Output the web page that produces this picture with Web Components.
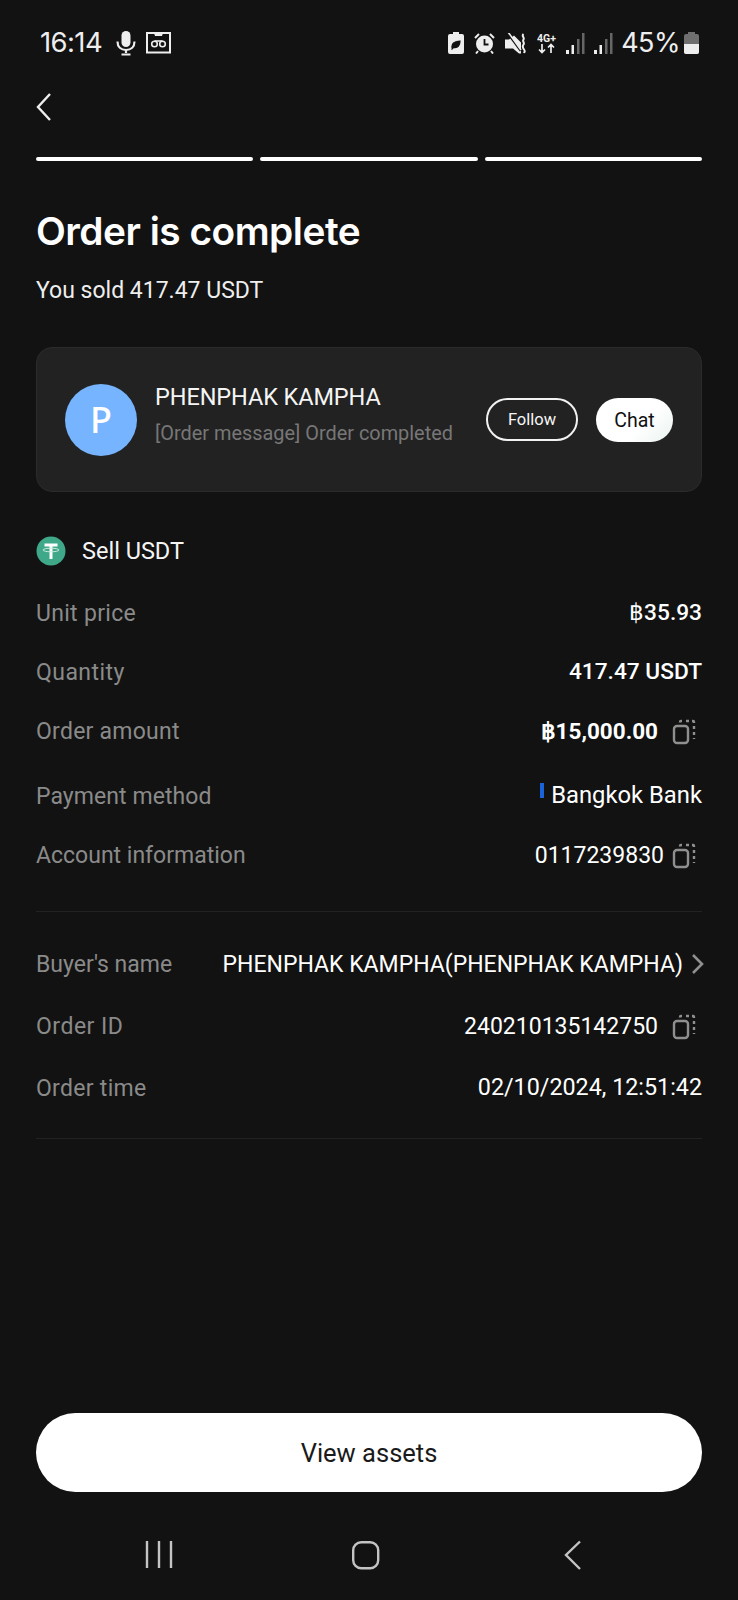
<!doctype html>
<html><head><meta charset="utf-8"><style>
html,body{margin:0;background:#121212}
body{width:738px;height:1600px;overflow:hidden;font-family:Roboto,"Noto Sans",sans-serif;color:#fff}
</style></head><body>
<order-app></order-app>
<template id="status-t"><style>
:host{display:flex;height:86px;box-sizing:border-box;padding:23px 39px 0 40px;justify-content:space-between;align-items:flex-start;color:#eee}
.g{display:flex;align-items:center;height:40px}
.t{font:400 27.5px/40px Inter,Roboto,sans-serif;letter-spacing:-.6px;margin-top:-2px}
svg{display:block}
.p{font:400 27px/40px Inter,Roboto,sans-serif;letter-spacing:-.5px}
</style>
<div class="g"><span class="t">16:14</span>
<svg style="margin-left:13px" width="22" height="26" viewBox="0 0 22 26"><rect x="6.500" y="1" width="9" height="16" rx="4.500" fill="#eee"/><path d="M2.500 11.500c0 5.500 3.500 8.500 8.500 8.500s8.500-3 8.500-8.500" fill="none" stroke="#eee" stroke-width="2.200"/><path d="M11 20v3M6.500 24.500h9" stroke="#eee" stroke-width="2.200"/></svg>
<svg style="margin-left:9px" width="26" height="24" viewBox="0 0 26 24"><rect x="1" y="2" width="23" height="19.500" fill="none" stroke="#eee" stroke-width="2"/><path d="M8 2h9l-1 3H9z" fill="#eee"/><circle cx="8.500" cy="13" r="2.800" fill="none" stroke="#eee" stroke-width="1.600"/><circle cx="16.500" cy="13" r="2.800" fill="none" stroke="#eee" stroke-width="1.600"/><path d="M8.500 10h8" stroke="#eee" stroke-width="1.600"/></svg></div>
<div class="g">
<svg width="16" height="22" viewBox="0 0 16 22"><path d="M5 0h6v2h3a2 2 0 0 1 2 2v16a2 2 0 0 1-2 2H2a2 2 0 0 1-2-2V4a2 2 0 0 1 2-2h3z" fill="#eee"/><path d="M4 16c-.500-5 3-7 8-7 0 5-2.500 7-6 6.500M3.500 17.500l4-4" fill="#121212" stroke="#121212" stroke-width="1.200"/></svg>
<svg style="margin-left:10px" width="21" height="21" viewBox="0 0 21 21"><circle cx="10.500" cy="11" r="8.500" fill="#eee"/><path d="M10.500 6v5.500h4" fill="none" stroke="#121212" stroke-width="1.800"/><path d="M1 5l4-4M20 5l-4-4M4 18l-2 2.500M17 18l2 2.500" stroke="#eee" stroke-width="2"/></svg>
<svg style="margin-left:10px" width="21" height="21" viewBox="0 0 21 21"><path d="M0 6.500h4L9 2.500l7 7v11h-2L8 15.500H0z" fill="#eee"/><path d="M1.500 -1l14 19" stroke="#121212" stroke-width="1.600"/><path d="M3 -1l13 18" stroke="#eee" stroke-width="1.600"/><path d="M18.500 1c-2.500 2 1.500 3.500 0 5.500s1.500 3 0 5-1 3 .5 5 .5 2 0 3.500" fill="none" stroke="#eee" stroke-width="2"/></svg>
<svg style="margin-left:11px" width="21" height="22" viewBox="0 0 21 22"><text x="0" y="9.500" font-family="Roboto,sans-serif" font-size="10.500" font-weight="700" fill="#eee">4G+</text><path d="M5 12v8M2 17.500l3 3 3-3M14 21v-8M11 15.500l3-3 3 3" fill="none" stroke="#eee" stroke-width="1.700"/></svg>
<svg style="margin-left:8px" width="19" height="21" viewBox="0 0 19 21"><rect x="0" y="17" width="3" height="4" fill="#eee"/><rect x="5.500" y="12" width="2.500" height="9" fill="#eee"/><rect x="11" y="6" width="2.500" height="15" fill="#666"/><rect x="16" y="0" width="2.500" height="21" fill="#666"/></svg>
<svg style="margin-left:9px" width="19" height="21" viewBox="0 0 19 21"><rect x="0" y="17" width="3" height="4" fill="#eee"/><rect x="5.500" y="12" width="2.500" height="9" fill="#eee"/><rect x="11" y="6" width="2.500" height="15" fill="#666"/><rect x="16" y="0" width="2.500" height="21" fill="#666"/></svg>
<span class="p" style="margin-left:8px">45%</span>
<svg style="margin-left:4px" width="15" height="22" viewBox="0 0 15 22"><path d="M4 0h7v2h2a2 2 0 0 1 2 2v16a2 2 0 0 1-2 2H2a2 2 0 0 1-2-2V4a2 2 0 0 1 2-2h2z" fill="#6f6f6f"/><path d="M0 12h15v8a2 2 0 0 1-2 2H2a2 2 0 0 1-2-2z" fill="#eee"/></svg>
</div></template>

<template id="row-t"><style>
:host{display:flex;justify-content:space-between;align-items:center;height:var(--h,36px);margin-top:var(--m,0);font:400 23px/1 Roboto,sans-serif;white-space:nowrap}
.l{color:#8a8a8a;letter-spacing:var(--ls,0)}
.r{display:flex;align-items:center;color:#fff}
</style><span class="l"><slot name="label"></slot></span><span class="r"><slot></slot></span></template>

<template id="copy-t"><style>:host{display:block;width:24px;height:24px;margin:0 6px 0 14px}svg{display:block}</style>
<svg width="24" height="26" viewBox="0 0 24 26" fill="none" stroke="#8f8f8f" stroke-width="2.400"><rect x="2" y="7" width="14" height="17" rx="3"/><path d="M8 3.500V3a1 1 0 0 1 1-1h1M14 2h3M20 2h1a1 1 0 0 1 1 1v1M22 7v3M22 13v3M22 19v1"/></svg></template>

<template id="card-t"><style>
:host{display:flex;align-items:center;box-sizing:border-box;height:145px;margin:0 36px;background:#222;border:1px solid #2b2b2b;border-radius:16px;padding:0 28px}
.a{width:72px;height:72px;border-radius:50%;background:#76b4ff;display:flex;align-items:center;justify-content:center;font:500 36px/1 "Noto Sans",sans-serif;color:#fff;flex:none}
.i{margin-left:18px;flex:1;min-width:0;padding-bottom:10px}
.n{font:400 23.500px/30px Roboto,sans-serif;color:#f5f5f5;letter-spacing:-.1px}
.s{font:400 19.900px/26px Roboto,sans-serif;color:#777;margin-top:9px;white-space:nowrap}
.b{box-sizing:border-box;display:flex;align-items:center;justify-content:center;border-radius:22px;flex:none}
.f{width:92px;height:43px;border:2px solid #f2f2f2;font:400 16.500px/1 Roboto,sans-serif;color:#f5f5f5;padding-top:1px}
.c{width:77px;height:44px;margin-left:18px;background:linear-gradient(135deg,#fff 60%,#e9f3ef);color:#111;font:400 19.500px/1 Roboto,sans-serif;padding-top:3px}
</style><div class="a">P</div><div class="i"><div class="n">PHENPHAK KAMPHA</div><div class="s">[Order message] Order completed</div></div><div class="b f">Follow</div><div class="b c">Chat</div></template>

<template id="nav-t"><style>:host{display:flex;justify-content:space-between;align-items:center;box-sizing:border-box;height:60px;padding:0 155px 0 145px}svg{display:block}</style>
<svg width="28" height="30" viewBox="0 0 28 30" stroke="#c4c4c4" stroke-width="2.400"><path d="M2 1v27M14 1v27M26 1v27"/></svg>
<svg style="margin-left:-4px" width="30" height="30" viewBox="0 0 30 30"><rect x="2.200" y="2.200" width="25" height="26" rx="8" fill="none" stroke="#c4c4c4" stroke-width="2.400"/></svg>
<svg width="20" height="30" viewBox="0 0 20 30"><path d="M17 1.500 3 15l14 14" fill="none" stroke="#c4c4c4" stroke-width="2.400"/></svg></template>

<template id="app-t"><style>
:host{display:block;width:738px;height:1600px;position:relative}
.back{display:block;margin:6px 0 0 36px}
.bars{display:flex;gap:7px;margin:35px 36px 0}
.bars i{flex:1;height:4px;background:#fff;border-radius:2px}
h1{margin:45px 36px 0;font:600 38.800px/50px Inter,Roboto,sans-serif;letter-spacing:-.5px;color:#fff}
.sub{margin:20px 36px 0;font:400 23px/30px Roboto,sans-serif;color:#eee}
.sell{display:flex;align-items:center;margin:43px 36px 0;height:32px;font:400 23.500px/1 Roboto,sans-serif;color:#f5f5f5}
.sell span{padding-top:2px}
.sell svg{margin-right:16px}
.rows{margin:0 36px}
hr{border:0;height:1px;background:#222;margin:0}
.btn{display:flex;align-items:center;justify-content:center;box-sizing:border-box;padding-top:2px;height:79px;margin:0 36px;border-radius:40px;background:#fff;color:#1a1a1a;font:400 25.500px/1 Roboto,sans-serif}
.bold{font-weight:700;font-size:22.500px}
.val{font-weight:500;font-size:22.700px}
.blue{width:4px;height:15px;background:#1a63d8;margin:-10px 7px 0 0;display:block}
.sp{height:274px}
</style>
<status-bar></status-bar>
<svg class="back" width="16" height="30" viewBox="0 0 16 30"><path d="M14 2 2 15l12 13" fill="none" stroke="#eee" stroke-width="2.400"/></svg>
<div class="bars"><i></i><i></i><i></i></div>
<h1>Order is complete</h1>
<div class="sub">You sold 417.47 USDT</div>
<div style="height:41px"></div>
<chat-card></chat-card>
<div class="sell"><svg width="30" height="30" viewBox="0 0 30 30"><circle cx="15" cy="15" r="14.500" fill="#3fa888"/><path d="M8.500 9h13M15 9v14" stroke="#fff" stroke-width="3" fill="none"/><ellipse cx="15" cy="14" rx="8" ry="1.800" fill="none" stroke="#cdeade" stroke-width="1"/></svg><span>Sell USDT</span></div>
<div class="rows">
<info-row style="--m:22px;--h:48px;--ls:.3px"><span slot="label">Unit price</span><span class="val">฿35.93</span></info-row>
<info-row style="--m:11px;--h:48px;--ls:.45px"><span slot="label">Quantity</span><span class="val">417.47 USDT</span></info-row>
<info-row style="--m:11px;--h:48px;--ls:.25px"><span slot="label">Order amount</span><span class="bold">฿15,000.00</span><copy-icon></copy-icon></info-row>
<info-row style="--m:17px;--h:48px;--ls:.07px"><span slot="label">Payment method</span><i class="blue"></i><span style="font-size:23.800px">Bangkok Bank</span></info-row>
<info-row style="--m:11px;--h:48px"><span slot="label">Account information</span><span>0117239830</span><copy-icon style="margin-left:8px"></copy-icon></info-row>
<hr style="margin-top:32px">
<info-row style="--m:28px;--h:48px"><span slot="label">Buyer's name</span><span>PHENPHAK KAMPHA(PHENPHAK KAMPHA)</span><svg style="margin:0 -2px 0 8px;display:block" width="13" height="22" viewBox="0 0 13 22"><path d="M2 2l9 9-9 9" fill="none" stroke="#8f8f8f" stroke-width="2.600"/></svg></info-row>
<info-row style="--m:14px;--h:48px;--ls:.5px"><span slot="label">Order ID</span><span>240210135142750</span><copy-icon></copy-icon></info-row>
<info-row style="--m:14px;--h:48px;--ls:.3px"><span slot="label">Order time</span><span style="font-size:23.300px">02/10/2024, 12:51:42</span></info-row>
<hr style="margin-top:26px">
</div>
<div class="sp"></div>
<div class="btn">View assets</div>
<div style="height:33px"></div>
<nav-bar></nav-bar>
</template>
<script>
function def(name,tid){customElements.define(name,class extends HTMLElement{constructor(){super();this.attachShadow({mode:'open'}).appendChild(document.getElementById(tid).content.cloneNode(true));}});}
def('status-bar','status-t');def('info-row','row-t');def('copy-icon','copy-t');def('chat-card','card-t');def('nav-bar','nav-t');def('order-app','app-t');
</script>
</body></html>
